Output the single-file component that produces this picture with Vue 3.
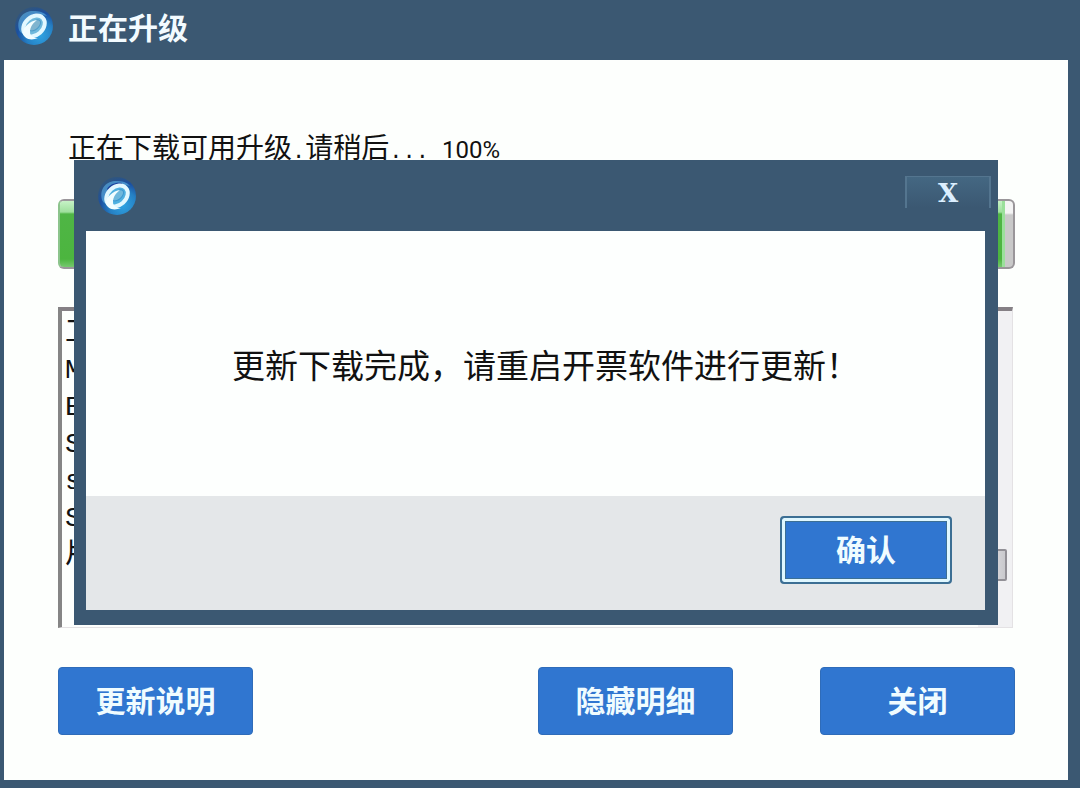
<script setup>
import { ref } from 'vue'

const percent = ref(100)
const logLines = ['工', 'M', 'E', 'S', 's', 'S', '片']
</script>

<template>
  <main class="window">
    <header class="titlebar">
      <svg class="logo" viewBox="0 0 40 40" aria-hidden="true">
        <defs>
          <radialGradient id="orb" cx="66%" cy="74%" r="74%">
            <stop offset="0" stop-color="#2fa3e2" />
            <stop offset="0.5" stop-color="#2580c4" />
            <stop offset="0.8" stop-color="#1b50a0" />
            <stop offset="1" stop-color="#2f5580" />
          </radialGradient>
        </defs>
        <circle cx="20" cy="20" r="19" fill="url(#orb)" />
        <path d="M5 24C2 12 10 5 19 5c6 0 11 1 14 5-9-3-17-1-21 6-2 4-3 8-2 12-3-1-4-2-5-4Z" fill="#5fb2e2" opacity=".6" />
        <path d="M12 13c3-4 8-6 13-5l-1 2c-5 0-9 2-12 6Z" fill="#1a3f9a" />
        <g transform="rotate(-42 20 20)">
          <ellipse cx="20" cy="20" rx="12" ry="9" fill="#6fb9dc" stroke="#e2f8ff" stroke-width="4" />
          <ellipse cx="21" cy="20" rx="7" ry="4" fill="#7fb4cf" stroke="#4d9cc9" stroke-width="1" />
        </g>
        <path d="M9 27c1 6 8 8 15 5-5 0-8-2-8-6 0-5 3-9 7-12-7 1-14 7-14 13Z" fill="#f2fdff" />
      </svg>
      <h1>正在升级</h1>
    </header>

    <section class="body">
      <p class="status">
        <span>正在下载可用升级</span><span class="dots">.</span><span>请稍后</span><span class="dots">...&nbsp;</span><span class="percent">{{ percent }}%</span>
      </p>

      <div class="progress" role="progressbar" aria-label="下载进度" :aria-valuenow="percent">
        <div class="fill" :style="{ width: percent + '%' }"></div>
      </div>

      <div class="log">
        <div class="lines">
          <p v-for="(line, i) in logLines" :key="i">{{ line }}</p>
        </div>
        <div class="track"><div class="thumb"></div></div>
      </div>

      <footer class="actions">
        <button type="button" class="btn notes">更新说明</button>
        <button type="button" class="btn">隐藏明细</button>
        <button type="button" class="btn">关闭</button>
      </footer>
    </section>

    <section class="dialog" role="dialog" aria-describedby="message">
      <header class="dialog-title">
        <svg class="logo" viewBox="0 0 40 40" aria-hidden="true">
          <circle cx="20" cy="20" r="19" fill="url(#orb)" />
          <path d="M5 24C2 12 10 5 19 5c6 0 11 1 14 5-9-3-17-1-21 6-2 4-3 8-2 12-3-1-4-2-5-4Z" fill="#5fb2e2" opacity=".6" />
          <path d="M10 13c3-5 9-7 15-6l-1 3c-5 0-9 2-12 6Z" fill="#1a3f9a" />
          <g transform="rotate(-42 20 20)">
            <ellipse cx="20" cy="20" rx="12" ry="9" fill="#4fb0e0" stroke="#e2f8ff" stroke-width="4" />
            <ellipse cx="21" cy="20" rx="7" ry="4" fill="#6fb8dc" stroke="#3c97cf" stroke-width="1" />
          </g>
          <path d="M9 27c1 6 8 8 15 5-5 0-8-2-8-6 0-5 3-9 7-12-7 1-14 7-14 13Z" fill="#f2fdff" />
        </svg>
        <button type="button" class="close">X</button>
      </header>
      <p id="message" class="message">更新下载完成，请重启开票软件进行更新！</p>
      <footer class="dialog-actions">
        <button type="button" class="btn confirm">确认</button>
      </footer>
    </section>
  </main>
</template>

<style>
body {
  margin: 0;
}
</style>

<style scoped>
* {
  box-sizing: border-box;
}

.window {
  position: relative;
  display: flex;
  flex-direction: column;
  min-height: 100vh;
  padding: 0 12px 8px 4px;
  background: #3b5872;
  font-family: "Noto Sans CJK SC", sans-serif;
}

h1,
p {
  margin: 0;
}

.titlebar {
  display: flex;
  align-items: center;
  gap: 14px;
  height: 60px;
  padding: 0 10px 8px;
}

.titlebar h1 {
  color: #f3fbff;
  font-size: 30px;
  font-weight: 700;
  line-height: 40px;
}

.logo {
  width: 40px;
  height: 40px;
}

.body {
  display: flex;
  flex: 1;
  flex-direction: column;
  padding: 69px 53px 45px 54px;
  background: #fdfffd;
}

.status {
  display: flex;
  align-items: baseline;
  height: 34px;
  padding-left: 10px;
  color: #111;
  font-size: 28px;
  line-height: 34px;
  white-space: nowrap;
}

.dots {
  font-family: "Liberation Mono", monospace;
  font-size: 22px;
}

.percent {
  font-family: Roboto, sans-serif;
  font-size: 24px;
}

.progress {
  height: 70px;
  margin-top: 36px;
  padding-right: 8px;
  border: 2px solid #9a969a;
  border-left-color: #8cc48c;
  border-radius: 6px;
  background: linear-gradient(#f4f4f4 0 12px, #c9c9c9 14px);
  overflow: hidden;
}

.fill {
  height: 100%;
  border-right: 3px solid #9be09b;
  background: linear-gradient(#c6f2c6, #9fe09d 11px, #4fb545 13px, #4cb53f 58px, #76c86f);
}

.log {
  display: flex;
  flex: 1;
  min-height: 321px;
  margin: 38px 2px 39px 0;
  border: 1px solid #e4e2e4;
  border-top: 4px solid #858085;
  border-left: 4px solid #858585;
}

.lines {
  flex: 1;
  padding: 4px 3px;
  color: #111;
  font-family: "Liberation Mono", "Noto Sans CJK SC", monospace;
  font-size: 28px;
  line-height: 37px;
}

.track {
  display: flex;
  flex-direction: column;
  justify-content: flex-end;
  width: 34px;
  padding: 0 5px 46px 0;
  background: #f1f1f3;
}

.thumb {
  height: 32px;
  border: 2px solid #929096;
  border-radius: 2px;
  background: linear-gradient(90deg, #ececee, #c9c9cd);
}

.actions {
  display: flex;
  gap: 87px;
}

.btn {
  width: 195px;
  height: 68px;
  padding: 0 0 4px;
  border: 1px solid #2f6cb9;
  border-radius: 4px;
  background: #3076d0;
  color: #f0fcff;
  font-family: inherit;
  font-size: 30px;
  font-weight: 700;
  line-height: 40px;
}

.notes {
  margin-right: auto;
}

.dialog {
  position: absolute;
  top: 160px;
  right: 82px;
  bottom: 163px;
  left: 74px;
  display: flex;
  flex-direction: column;
  padding: 0 13px 15px 12px;
  background: #3b5872;
}

.dialog-title {
  display: flex;
  align-items: flex-start;
  justify-content: space-between;
  height: 71px;
  padding: 16px 0 0 11px;
}

.close {
  width: 86px;
  height: 32px;
  margin-right: -6px;
  padding: 0;
  border: solid #54758f;
  border-width: 1px 2px 0;
  background: linear-gradient(#446782, #3b5872);
  color: #dcefff;
  font-family: "DejaVu Serif", serif;
  font-size: 26px;
  font-weight: 700;
  line-height: 30px;
}

.message {
  display: flex;
  flex: 1;
  align-items: center;
  justify-content: center;
  padding-left: 20px;
  background: #fdfffe;
  color: #111;
  font-size: 33px;
  line-height: 44px;
  white-space: nowrap;
}

.dialog-actions {
  display: flex;
  justify-content: flex-end;
  height: 114px;
  padding: 20px 33px 0;
  background: #e4e7e9;
}

.confirm {
  width: 172px;
  border: 2px solid #3c6f94;
  box-shadow: inset 0 0 0 3px #dff7ff, inset 0 0 0 4px #3c6f94;
}
</style>
